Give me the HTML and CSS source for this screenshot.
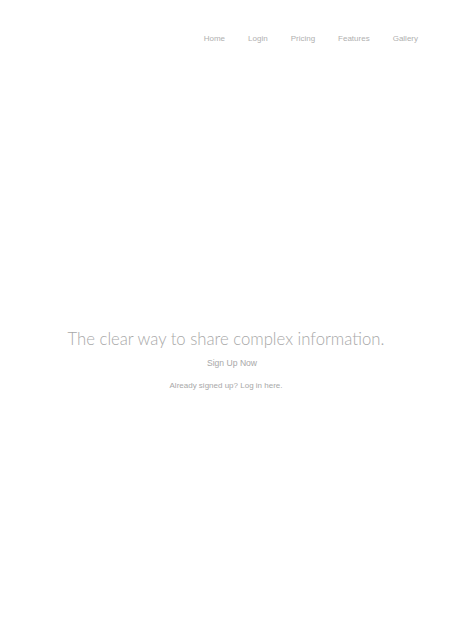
FILE: index.html
```html
<!DOCTYPE html>
<html>
<head>
<meta charset="utf-8">
<link rel="stylesheet" href="styles.css">
</head>
<body>
<div class="page">
  <nav class="nav">
    <a class="nav-link" href="#">Home</a>
    <a class="nav-link" href="#">Login</a>
    <a class="nav-link" href="#">Pricing</a>
    <a class="nav-link" href="#">Features</a>
    <a class="nav-link" href="#">Gallery</a>
  </nav>
  <main class="hero">
    <h1 class="title">The clear way to share complex information.</h1>
    <a class="signup" href="#">Sign Up Now</a>
    <p class="login">Already signed up? Log in here.</p>
  </main>
</div>
</body>
</html>
```
FILE: styles.css
```css
html, body {
  margin: 0;
  padding: 0;
  background: #fff;
}
.page {
  width: 452px;
  height: 640px;
  display: flex;
  flex-direction: column;
  font-family: "Liberation Sans", Arial, sans-serif;
}
.nav {
  display: flex;
  justify-content: flex-end;
  gap: 23px;
  padding: 33px 34px 0 0;
}
.nav-link {
  font-size: 8px;
  line-height: 11px;
  color: #b0b0b0;
  text-decoration: none;
}
.hero {
  display: flex;
  flex-direction: column;
  align-items: center;
  padding-top: 284px;
}
.title {
  margin: 0;
  font-family: Lato, sans-serif;
  font-weight: 300;
  font-size: 16.7px;
  line-height: 22px;
  color: #a8a8a8;
}
.signup {
  margin-top: 8px;
  padding-left: 12px;
  font-size: 8.6px;
  line-height: 11px;
  color: #a8a8a8;
  text-decoration: none;
}
.login {
  margin: 12px 0 0;
  font-size: 8px;
  line-height: 10px;
  color: #a8a8a8;
}
```
